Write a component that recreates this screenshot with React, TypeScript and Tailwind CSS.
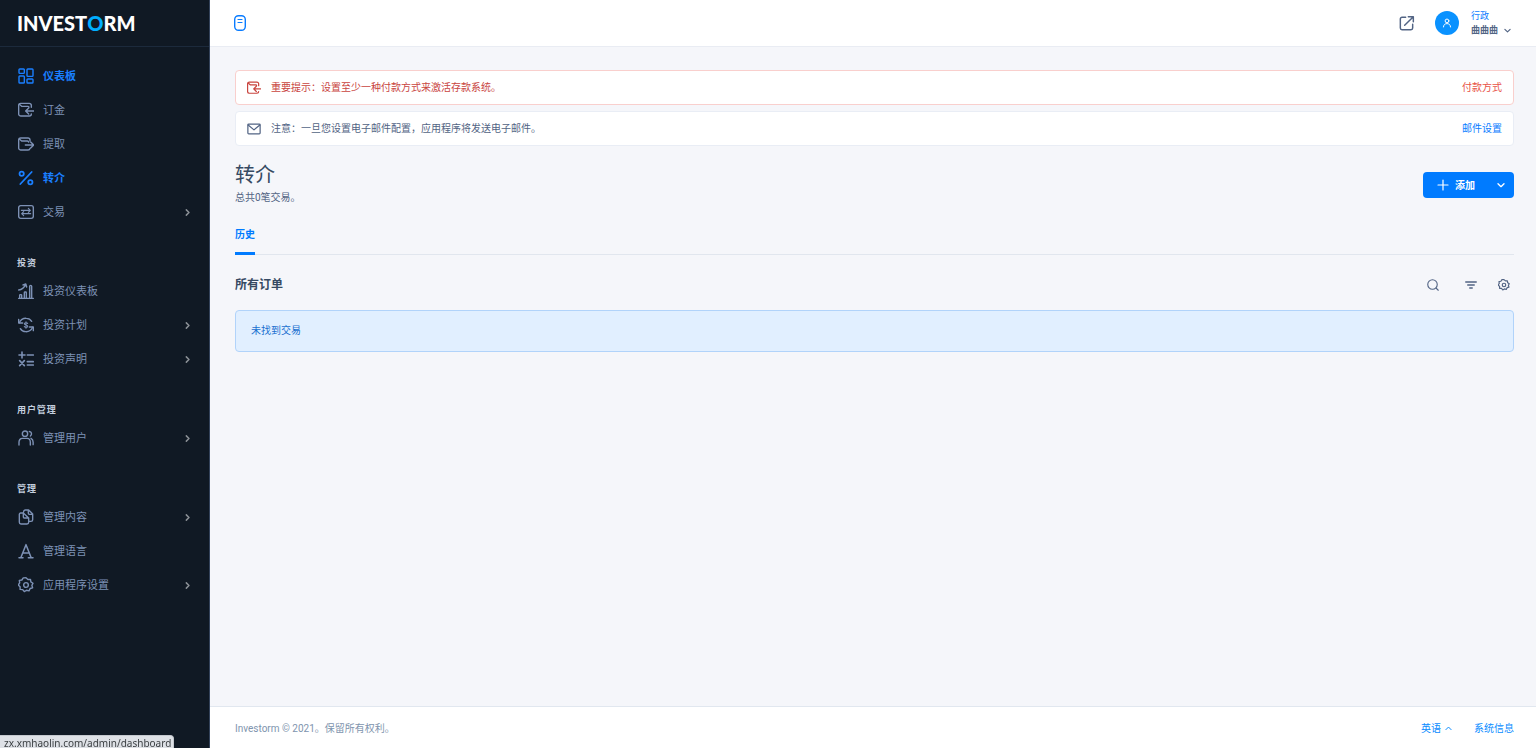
import type { ReactNode } from "react";

type IconProps = { children: ReactNode; className?: string; weight?: number };

function Icon({ children, className = "size-4", weight = 2.1 }: IconProps) {
  return (
    <svg
      viewBox="0 0 24 24"
      fill="none"
      stroke="currentColor"
      strokeWidth={weight}
      strokeLinecap="round"
      strokeLinejoin="round"
      aria-hidden="true"
      className={`shrink-0 ${className}`}
    >
      {children}
    </svg>
  );
}

const gearPath =
  "M12 1.200l2.900 2.600 3.800-.3.600 3.800 3.200 2.100-1.700 3.100 1.100 3.700-3.700 1.100-1.700 3.500-3.700-.9-3.300 1.900-2.500-2.900-3.800-.3-.1-3.900-2.800-2.700 2.200-3.100-.5-3.800 3.800-.6 2.100-3.200z";

const shapes: Record<string, ReactNode> = {
  dashboard: (
    <>
      <rect x="1.500" y="1.500" width="8" height="6.500" rx="1.200" />
      <rect x="13.500" y="1.500" width="9" height="11" rx="1.200" />
      <rect x="1.500" y="12" width="8" height="10.500" rx="1.200" />
      <rect x="13.500" y="16.500" width="9" height="6" rx="1.200" />
    </>
  ),
  deposit: (
    <>
      <path d="M20 8V5A3 3 0 0 0 17 2H4a3 3 0 0 0-3 3v13a3 3 0 0 0 3 3h13a3 3 0 0 0 3-3" />
      <path d="M2 3.500l3.500 3H15a1.500 1.500 0 0 1 1.500 1.500M23.500 13.500H12M16 9l-4.500 4.500L16 18" />
    </>
  ),
  withdraw: (
    <>
      <path d="M18 7.500V6a3 3 0 0 0-3-3H4a3 3 0 0 0-3 3v12a3 3 0 0 0 3 3h11a3 3 0 0 0 3-2.500" />
      <path d="M2 4.500l3.500 3H14a2 2 0 0 1 2 1.500M11 13.500h12M19 9l4.500 4.500L19 18" />
    </>
  ),
  percent: (
    <g strokeWidth="2.700">
      <circle cx="5.500" cy="5.500" r="3.200" />
      <circle cx="18.500" cy="18.500" r="3.200" />
      <path d="M20.500 3L3.500 21" />
    </g>
  ),
  exchange: (
    <>
      <rect x="1" y="2.500" width="22" height="19" rx="3" />
      <path d="M5 9.500h13.500M15.500 6.500l3 3-3 3M19 14.500H5.500M8.500 11.500l-3 3 3 3" strokeWidth="1.700" />
    </>
  ),
  growth: (
    <>
      <path d="M1 23h22M2.500 22.500v-4a1 1 0 0 1 1-1h1a1 1 0 0 1 1 1v4M9.500 22.500v-8a1 1 0 0 1 1-1h1a1 1 0 0 1 1 1v8M17.500 22.500V5a1.500 1.500 0 0 1 3 0v17.500" />
      <path d="M1 10.500c4.500-.5 8-3 10.500-8M7.500 3l4.200-1.500L13 6" />
    </>
  ),
  plan: (
    <>
      <path d="M2 8.500C4 4 8 1.800 12.500 2c3.500 0 6.500 2 8 4.500M22 15.500C20 20 16 22.200 11.500 22c-3.500 0-6.500-2-8-4.500" />
      <path d="M1 3.500v5.500h6M23 20.500V15h-6" />
      <path
        d="M14.500 9.800c-.3-.9-1.200-1.300-2.500-1.300-1.400 0-2.500.6-2.500 1.700 0 2.600 5.100 1 5.100 3.700 0 1.100-1.200 1.700-2.600 1.700s-2.300-.5-2.600-1.500M12 7v10"
        strokeWidth="1.600"
      />
    </>
  ),
  calc: (
    <path
      d="M6 1.500v9M1.500 6h9M14 6h9M2.500 14.500l7 7.500M9.500 14.500l-7 7.500M14 16h9M14 21h9"
      strokeWidth="2.400"
    />
  ),
  users: (
    <>
      <circle cx="10.500" cy="5.500" r="4" />
      <path d="M1.500 22.500v-4c0-3.500 2-6 5-6h7c3 0 5 2.500 5 6v4M17 2.200c3.500.3 4.500 4.600 1.500 6.800M19.500 12.500c2 1 3.200 3 3.200 6v3.500" />
    </>
  ),
  files: (
    <>
      <path d="M8 6H4a2 2 0 0 0-2 2v12a2.500 2.500 0 0 0 2.500 2.500h9A2.500 2.500 0 0 0 16 20v-1.500" />
      <path d="M17 18.500h2.500A2.500 2.500 0 0 0 22 16V7.500l-6-6h-5A2.500 2.500 0 0 0 8.500 4M8 6l8 7.500v5M8 6v6a1.500 1.500 0 0 0 1.500 1.500H16M15.500 2v4.500A1.500 1.500 0 0 0 17 8h5" />
    </>
  ),
  letter: <path d="M1.500 22h6M15.500 22h7M4.500 21.500L12 2.500l7.500 19M7.500 15h9" strokeWidth="2.300" />,
  gear: (
    <>
      <path d={gearPath} />
      <circle cx="12" cy="12" r="3.500" />
    </>
  ),
};

type Item = { label: string; icon: string; more?: boolean; active?: boolean };
type Group = { title?: string; items: Item[] };

const groups: Group[] = [
  {
    items: [
      { label: "仪表板", icon: "dashboard", active: true },
      { label: "订金", icon: "deposit" },
      { label: "提取", icon: "withdraw" },
      { label: "转介", icon: "percent", active: true },
      { label: "交易", icon: "exchange", more: true },
    ],
  },
  {
    title: "投资",
    items: [
      { label: "投资仪表板", icon: "growth" },
      { label: "投资计划", icon: "plan", more: true },
      { label: "投资声明", icon: "calc", more: true },
    ],
  },
  { title: "用户管理", items: [{ label: "管理用户", icon: "users", more: true }] },
  {
    title: "管理",
    items: [
      { label: "管理内容", icon: "files", more: true },
      { label: "管理语言", icon: "letter" },
      { label: "应用程序设置", icon: "gear", more: true },
    ],
  },
];

function Sidebar() {
  return (
    <aside className="flex w-[210px] shrink-0 flex-col border-r border-[#33425a] bg-[#101924]">
      <a
        href="#home"
        aria-label="INVESTORM"
        className="flex h-[47px] items-center border-b border-[#1c2a3c] pl-[17px] font-[Lato,sans-serif] text-[20px] leading-none font-black text-white"
      >
        INVEST<span className="text-[#00aeff]">O</span>RM
      </a>
      <nav className="flex flex-col gap-[22px] pt-3" aria-label="主菜单">
        {groups.map((group, index) => (
          <section key={index}>
            {group.title && (
              <h2 className="flex h-[23px] items-center pt-0.5 pl-[17px] text-[9px] font-bold tracking-widest text-[#c4cfdf]">
                {group.title}
              </h2>
            )}
            <ul>
              {group.items.map((item) => (
                <li key={item.label}>
                  <a
                    href="#menu"
                    className={`flex h-[34px] items-center gap-[9px] pr-[18px] pl-[18px] text-[11px] ${
                      item.active ? "font-bold text-[#1a7fff]" : "text-[#7d91b5]"
                    }`}
                  >
                    <Icon>{shapes[item.icon]}</Icon>
                    <span className="grow pt-0.5">{item.label}</span>
                    {item.more && (
                      <Icon className="size-[7px] text-[#8b9096]" weight={5}>
                        <path d="M8 3l9 9-9 9" />
                      </Icon>
                    )}
                  </a>
                </li>
              ))}
            </ul>
          </section>
        ))}
      </nav>
    </aside>
  );
}

function Header() {
  return (
    <header className="flex h-[47px] items-center justify-between border-b border-[#e9ecf3] bg-white pr-[25px] pl-6">
      <button type="button" aria-label="切换菜单" className="text-[#0a7cff]">
        <svg viewBox="0 0 12 16" fill="none" stroke="currentColor" className="h-4 w-3" aria-hidden="true">
          <rect x="0.700" y="0.700" width="10.600" height="14.600" rx="3.800" strokeWidth="1.400" />
          <path d="M4 4.500h4M4 7.500h4" strokeWidth="1.200" strokeLinecap="round" />
        </svg>
      </button>
      <div className="flex items-center gap-5">
        <a href="#site" aria-label="打开网站" className="text-[#526484]">
          <Icon className="size-4" weight={2.2}>
            <path d="M10 3.500H4.500A2.500 2.500 0 0 0 2 6v13.500A2.500 2.500 0 0 0 4.500 22H18a2.500 2.500 0 0 0 2.500-2.500V14M8.500 15.500L21.500 2.500M14 2.500h7.500V10" />
          </Icon>
        </a>
        <button type="button" className="flex items-center text-left">
          <span className="flex size-6 items-center justify-center rounded-full bg-[#0a92ff] text-white">
            <Icon className="size-[10px]" weight={2.4}>
              <circle cx="12" cy="7" r="4.500" />
              <path d="M3.500 21.500c.5-6 4-8 8.500-8s8 2 8.500 8" />
            </Icon>
          </span>
          <span className="ml-3 flex flex-col text-[9px] leading-[14px]">
            <span className="text-[#0a7cff]">行政</span>
            <span className="flex items-center gap-[6px] font-bold text-[#526484]">
              曲曲曲
              <Icon className="size-[7px]" weight={4}>
                <path d="M3 8l9 9 9-9" />
              </Icon>
            </span>
          </span>
        </button>
      </div>
    </header>
  );
}

function Notices() {
  return (
    <div className="flex flex-col gap-[6px] text-[10px]">
      <div className="flex h-[35px] items-center rounded-sm border border-[#f9cfcd] bg-white px-[11px] text-[#c9453f]">
        <Icon className="size-[14px]">{shapes.deposit}</Icon>
        <p className="ml-[10px] grow">重要提示：设置至少一种付款方式来激活存款系统。</p>
        <a href="#payment" className="text-[#e85347]">
          付款方式
        </a>
      </div>
      <div className="flex h-[35px] items-center rounded-sm border border-[#e9edf5] bg-white px-[11px] text-[#526484]">
        <Icon className="size-[14px]">
          <rect x="1.500" y="3.500" width="21" height="17" rx="1.500" />
          <path d="M2 5l10 8.500L22 5" />
        </Icon>
        <p className="ml-[10px] grow">注意：一旦您设置电子邮件配置，应用程序将发送电子邮件。</p>
        <a href="#mail" className="text-[#0a7cff]">
          邮件设置
        </a>
      </div>
    </div>
  );
}

function Tools() {
  const button = "flex size-5 items-center justify-center";
  return (
    <div className="flex items-center gap-[13px] text-[#526484]">
      <div className="flex gap-[18px]">
        <button type="button" aria-label="搜索" className={button}>
          <Icon className="size-3" weight={2.2}>
            <circle cx="11" cy="11" r="9.500" />
            <path d="M18.500 18.500l4 4" />
          </Icon>
        </button>
        <button type="button" aria-label="筛选" className={button}>
          <Icon className="size-3" weight={2.8}>
            <path d="M1.500 6h21M5.500 12h13M9.500 18h5" />
          </Icon>
        </button>
      </div>
      <button type="button" aria-label="设置" className={button}>
        <Icon className="size-3" weight={2.4}>
          {shapes.gear}
        </Icon>
      </button>
    </div>
  );
}

export default function App() {
  return (
    <div className="relative flex min-h-screen bg-[#f5f6fa] font-[Roboto,'Noto_Sans_CJK_SC',sans-serif] text-[#526484]">
      <Sidebar />
      <div className="flex min-w-0 grow flex-col">
        <Header />
        <main className="grow pt-[23px] pr-[22px] pl-[25px]">
          <Notices />
          <div className="mt-4 flex items-center justify-between">
            <div>
              <h1 className="text-[20px] leading-[26px] text-[#364a63]">转介</h1>
              <p className="text-[10px] leading-5">总共0笔交易。</p>
            </div>
            <button
              type="button"
              className="flex h-[26px] items-center rounded-sm bg-[#007bff] pr-[9px] pl-[14px] text-[10px] font-bold text-white"
            >
              <Icon className="size-3" weight={2.4}>
                <path d="M12 2v20M2 12h20" />
              </Icon>
              <span className="mr-[22px] ml-[6px]">添加</span>
              <Icon className="size-2" weight={4}>
                <path d="M3 8l9 9 9-9" />
              </Icon>
            </button>
          </div>
          <nav className="mt-[17px] flex border-b border-[#e1e6ee]" aria-label="标签">
            <a
              href="#history"
              className="-mb-px border-b-3 border-[#007bff] pb-[7px] text-[10px] leading-5 font-bold text-[#007bff]"
            >
              历史
            </a>
          </nav>
          <div className="mt-[18px] flex h-6 items-center justify-between">
            <h2 className="text-[12px] font-bold text-[#364a63]">所有订单</h2>
            <Tools />
          </div>
          <p className="mt-[13px] flex h-[42px] items-center rounded-sm border border-[#b1d3fa] bg-[#e1efff] px-[15px] pb-0.5 text-[10px] text-[#1a6fd0]">
            未找到交易
          </p>
        </main>
        <footer className="flex h-[42px] items-center justify-between border-t border-[#e1e7ef] bg-white pt-0.5 pr-[22px] pl-[25px] text-[10px] text-[#8094ae]">
          <p>Investorm © 2021。保留所有权利。</p>
          <div className="flex items-center gap-[22px] text-[#0a8cff]">
            <button type="button" className="flex items-center gap-1">
              英语
              <Icon className="size-[7px]" weight={3.4}>
                <path d="M3 16l9-9 9 9" />
              </Icon>
            </button>
            <a href="#system">系统信息</a>
          </div>
        </footer>
      </div>
      <div className="fixed bottom-0 left-0 h-[13px] rounded-tr-sm border-t border-r border-[#c4c8ce] bg-[#dee1e6] pr-0.5 pl-1 font-['Noto_Sans',sans-serif] text-[10px] leading-[15px] text-[#3c4043]">
        zx.xmhaolin.com/admin/dashboard
      </div>
    </div>
  );
}
